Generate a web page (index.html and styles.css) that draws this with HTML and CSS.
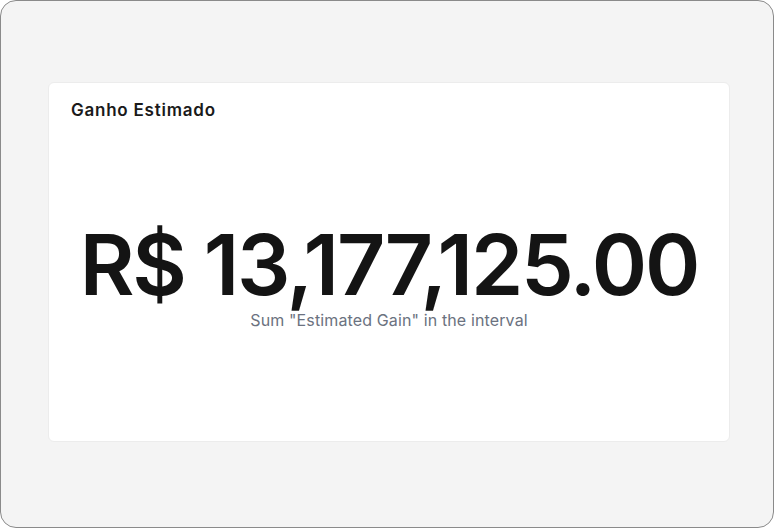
FILE: index.html
```html
<!DOCTYPE html>
<html>
<head>
<meta charset="utf-8">
<link rel="stylesheet" href="styles.css">
</head>
<body>
<div class="frame">
  <div class="card">
    <div class="title">Ganho Estimado</div>
    <div class="body">
      <div class="value">R$ 13,177,125.00</div>
      <div class="caption">Sum "Estimated Gain" in the interval</div>
    </div>
  </div>
</div>
</body>
</html>
```
FILE: styles.css
```css
html, body { margin: 0; padding: 0; }
body { font-family: Inter, "Noto Sans", sans-serif; }
.frame {
  box-sizing: border-box;
  width: 774px;
  height: 528px;
  border: 1px solid #8a8a8a;
  border-radius: 16px;
  background: #f4f4f4;
  padding: 81px 43px 86px 47px;
}
.card {
  box-sizing: border-box;
  height: 360px;
  background: #fff;
  border: 1px solid #ececec;
  border-radius: 6px;
  padding: 16px 22px 18px;
  display: flex;
  flex-direction: column;
}
.title {
  font-size: 17px;
  font-weight: 600;
  color: #1a1a1a;
  line-height: 22px;
  letter-spacing: 0.045em;
}
.body {
  flex: 1;
  display: flex;
  flex-direction: column;
  align-items: center;
  justify-content: center;
  padding-top: 13px;
}
.value {
  font-size: 84px;
  font-weight: 600;
  color: #141414;
  line-height: 76px;
  letter-spacing: -2.2px;
  white-space: nowrap;
}
.caption {
  font-size: 16px;
  color: #6b7280;
  line-height: 20px;
  margin-top: 7px;
  letter-spacing: 0.008em;
}
```
